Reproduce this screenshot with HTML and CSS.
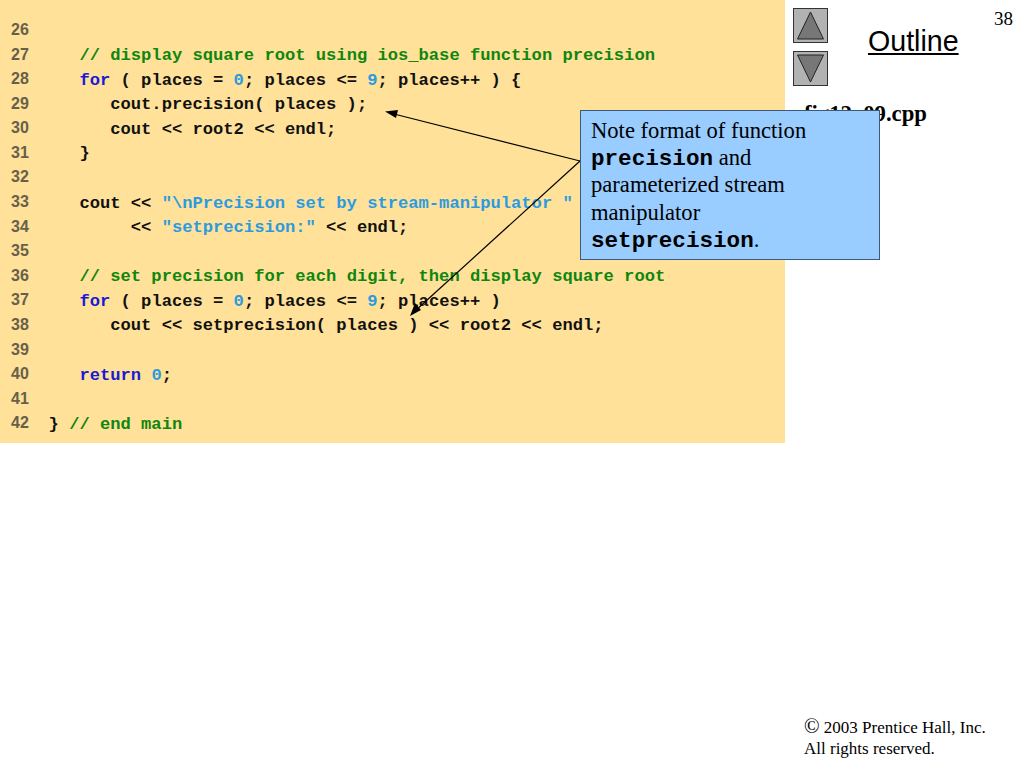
FILE: index.html
```html
<!DOCTYPE html>
<html lang="en">
<head>
<meta charset="utf-8">
<title>fig12_09.cpp</title>
<link rel="stylesheet" href="styles.css">
</head>
<body>
<div class="slide">
  <main class="code-panel">
    <div class="row"><span class="num">26</span><span class="code"></span></div>
    <div class="row"><span class="num">27</span><span class="code">   <span class="cm">// display square root using ios_base function precision</span></span></div>
    <div class="row"><span class="num">28</span><span class="code">   <span class="kw">for</span> ( places = <span class="lit">0</span>; places &lt;= <span class="lit">9</span>; places++ ) {</span></div>
    <div class="row"><span class="num">29</span><span class="code">      cout.precision( places );</span></div>
    <div class="row"><span class="num">30</span><span class="code">      cout &lt;&lt; root2 &lt;&lt; endl;</span></div>
    <div class="row"><span class="num">31</span><span class="code">   }</span></div>
    <div class="row"><span class="num">32</span><span class="code"></span></div>
    <div class="row"><span class="num">33</span><span class="code">   cout &lt;&lt; <span class="lit">"\nPrecision set by stream-manipulator "</span></span></div>
    <div class="row"><span class="num">34</span><span class="code">        &lt;&lt; <span class="lit">"setprecision:"</span> &lt;&lt; endl;</span></div>
    <div class="row"><span class="num">35</span><span class="code"></span></div>
    <div class="row"><span class="num">36</span><span class="code">   <span class="cm">// set precision for each digit, then display square root</span></span></div>
    <div class="row"><span class="num">37</span><span class="code">   <span class="kw">for</span> ( places = <span class="lit">0</span>; places &lt;= <span class="lit">9</span>; places++ )</span></div>
    <div class="row"><span class="num">38</span><span class="code">      cout &lt;&lt; setprecision( places ) &lt;&lt; root2 &lt;&lt; endl;</span></div>
    <div class="row"><span class="num">39</span><span class="code"></span></div>
    <div class="row"><span class="num">40</span><span class="code">   <span class="kw">return</span> <span class="lit">0</span>;</span></div>
    <div class="row"><span class="num">41</span><span class="code"></span></div>
    <div class="row"><span class="num">42</span><span class="code"><span>}</span> <span class="cm">// end main</span></span></div>
  </main>
  <aside class="side">
    <div class="side-top">
      <div class="nav">
        <div class="nav-btn"><svg class="nav-icon" viewBox="0 0 33 33"><polygon points="16.500,3 29.500,30 3.500,30"/></svg></div>
        <div class="nav-btn"><svg class="nav-icon" viewBox="0 0 33 33"><polygon points="16.500,30 29.500,3 3.500,3"/></svg></div>
      </div>
      <div class="outline">Outline</div>
      <div class="page-no">38</div>
    </div>
    <div class="filename">fig12_09.cpp</div>
    <footer class="copyright">
      <div><span class="copy-sign">©</span> 2003 Prentice Hall, Inc.</div>
      <div>All rights reserved.</div>
    </footer>
  </aside>
  <svg class="arrows" viewBox="0 0 1024 768">
    <line x1="580" y1="161" x2="392" y2="113.500"/>
    <line x1="580" y1="161" x2="415" y2="311"/>
    <polygon points="385,111.500 398,110 396,118"/>
    <polygon points="410,316 415,303 421,310"/>
  </svg>
  <div class="callout">
    <div>Note format of function</div>
    <div><b class="mono">precision</b> and</div>
    <div>parameterized stream</div>
    <div>manipulator</div>
    <div><b class="mono">setprecision</b>.</div>
  </div>
</div>
</body>
</html>
```
FILE: styles.css
```css
html, body {
  margin: 0;
  padding: 0;
  background: #fff;
}
.slide {
  position: relative;
  width: 1024px;
  height: 768px;
  display: flex;
  align-items: flex-start;
  overflow: hidden;
  font-family: "Liberation Serif", serif;
  color: #000;
}
.code-panel {
  box-sizing: border-box;
  width: 785px;
  height: 443px;
  padding: 18px 0 0 11px;
  background: #ffe199;
}
.row {
  display: flex;
  height: 24.58px;
  line-height: 24.58px;
}
.num {
  width: 37.6px;
  font: bold 16px/24.1px "Liberation Sans", sans-serif;
  color: #66604a;
}
.code {
  padding-top: 1.5px;
  font: bold 17.14px/24.58px "Liberation Mono", monospace;
  white-space: pre;
  color: #111;
}
.cm { color: #0f860f; }
.kw { color: #1a1ad6; }
.lit { color: #2b9be0; }
.side {
  width: 239px;
  height: 768px;
  display: flex;
  flex-direction: column;
}
.side-top {
  display: flex;
  align-items: flex-start;
  padding: 8px 11px 0 8px;
}
.nav {
  display: flex;
  flex-direction: column;
  gap: 8px;
}
.nav-btn {
  box-sizing: border-box;
  width: 35px;
  height: 35px;
  border: 1px solid #333;
  background: #b2b2b2;
}
.nav-icon {
  display: block;
  width: 33px;
  height: 33px;
}
.nav-icon polygon {
  fill: #777;
  stroke: #222;
  stroke-width: 1;
}
.outline {
  margin: 16px 0 0 40px;
  font: 28.6px/34px "Liberation Sans", sans-serif;
  text-decoration: underline;
}
.page-no {
  margin: 1px 0 0 auto;
  font-size: 19px;
  line-height: 20px;
}
.filename {
  margin: 15px 0 0 19px;
  font-size: 22.7px;
  line-height: 26px;
  font-weight: bold;
}
.copyright {
  margin: auto 0 9px 19px;
  font-size: 17px;
  line-height: 21px;
}
.copy-sign {
  font-size: 20.5px;
  line-height: 0;
}
.arrows {
  position: absolute;
  left: 0;
  top: 0;
  width: 1024px;
  height: 768px;
}
.arrows line {
  stroke: #000;
  stroke-width: 1.2;
}
.arrows polygon {
  fill: #000;
}
.callout {
  position: absolute;
  left: 580px;
  top: 110px;
  box-sizing: border-box;
  width: 300px;
  height: 150px;
  padding: 6px 10px 0;
  background: #99ccff;
  border: 1px solid #3d5a78;
  font-size: 22.6px;
  line-height: 27.2px;
}
.mono {
  font-family: "Liberation Mono", monospace;
  line-height: 1;
}
```
